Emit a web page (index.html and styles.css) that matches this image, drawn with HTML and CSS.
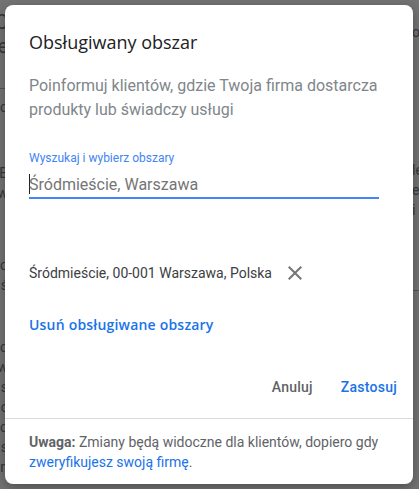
FILE: index.html
```html
<!DOCTYPE html>
<html lang="pl">
<head>
<meta charset="utf-8">
<title>Obsługiwany obszar</title>
<link rel="stylesheet" href="styles.css">
</head>
<body>
<div class="page" aria-hidden="true">
  <div class="col left">
    <div class="ln big">C</div>
    <div class="ln big">e</div>
    <div class="rule"></div>
    <div class="ln">o</div>
    <div class="ln gap1">B</div>
    <div class="ln">w</div>
    <div class="ln gap2">o</div>
    <div class="ln">ś</div>
    <div class="ln gap3">o</div>
    <div class="ln">w</div>
    <div class="ln">s</div>
    <div class="ln">c</div>
    <div class="ln">o</div>
    <div class="ln">s</div>
    <div class="ln">n</div>
  </div>
  <div class="mid"></div>
  <div class="col right">
    <div class="ln">ou</div>
    <div class="ln gapr">le</div>
    <div class="ln">er</div>
    <div class="ln">i</div>
    <div class="rule rr"></div>
  </div>
</div>
<div class="scrim"></div>

<div class="dialog" role="dialog" aria-labelledby="dlg-title">
  <div class="body">
    <h1 class="title" id="dlg-title">Obsługiwany obszar</h1>
    <p class="desc">Poinformuj klientów, gdzie Twoja firma dostarcza produkty lub świadczy usługi</p>

    <div class="field">
      <label class="field-label" for="area">Wyszukaj i wybierz obszary</label>
      <div class="field-input">
        <span class="caret"></span><span class="field-value" id="area">Śródmieście, Warszawa</span>
      </div>
    </div>

    <div class="area-item">
      <span class="area-name">Śródmieście, 00-001 Warszawa, Polska</span>
      <svg class="x-icon" width="24" height="24" viewBox="0 0 24 24" aria-hidden="true">
        <path d="M19 6.41 17.59 5 12 10.59 6.41 5 5 6.41 10.59 12 5 17.59 6.41 19 12 13.41 17.59 19 19 17.59 13.41 12z" fill="#757575"/>
      </svg>
    </div>

    <a class="remove-link" href="#">Usuń obsługiwane obszary</a>
  </div>

  <div class="actions">
    <button class="btn btn-cancel" type="button">Anuluj</button>
    <button class="btn btn-apply" type="button">Zastosuj</button>
  </div>

  <div class="note">
    <b>Uwaga:</b> Zmiany będą widoczne dla klientów, dopiero gdy <a href="#">zweryfikujesz swoją firmę</a>.
  </div>
</div>
</body>
</html>
```

FILE: styles.css
```css
* { box-sizing: border-box; }
html, body { margin: 0; height: 100%; }
body {
  font-family: Roboto, "Liberation Sans", Arial, sans-serif;
  background: #fff;
  overflow: hidden;
  position: relative;
  width: 419px;
  height: 489px;
}

/* background page */
.page {
  display: grid;
  grid-template-columns: 8px 1fr 7px;
  height: 489px;
  color: #7a7a7a;
  font-size: 14px;
}
.col { display: flex; flex-direction: column; overflow: hidden; }
.left { padding-top: 10px; }
.right { padding-top: 22px; }
.ln {
  display: flex;
  white-space: nowrap;
  line-height: 20px;
  height: 20px;
}
.left .ln { justify-content: flex-end; }
.ln.big { font-size: 20px; line-height: 24px; height: 24px; }
.rule { height: 1px; background: #bbb; margin: 30px 0 8px; }
.gap1 { margin-top: 46px; }
.gap2 { margin-top: 52px; }
.gap3 { margin-top: 42px; }
.gapr { margin-top: 118px; }
.rr { margin: 70px 0 0; }

.scrim {
  position: absolute;
  inset: 0;
  background: rgba(0, 0, 0, 0.55);
}

/* dialog */
.dialog {
  position: absolute;
  left: 5px;
  top: 5px;
  width: 408px;
  height: 479px;
  background: #fff;
  border-radius: 8px;
  box-shadow: 0 4px 12px rgba(0,0,0,0.3);
  display: flex;
  flex-direction: column;
}
.body { padding: 25px 24px 0; display: flex; flex-direction: column; align-items: flex-start; }
.title {
  margin: 0;
  font-family: "Open Sans", Roboto, sans-serif;
  font-weight: 400;
  font-size: 18px;
  line-height: 24px;
  color: #202124;
}
.desc {
  margin: 20px 0 0;
  font-size: 16px;
  line-height: 24px;
  color: #80868b;
  width: 360px;
}
.field { margin-top: 28px; width: 350px; }
.field-label {
  display: block;
  font-size: 12px;
  line-height: 16px;
  color: #4285f4;
}
.field-input {
  display: flex;
  align-items: center;
  height: 33px;
  padding-top: 5px;
  border-bottom: 2px solid #4285f4;
  font-size: 16px;
  color: #757575;
}
.caret {
  width: 1px;
  height: 20px;
  background: #202124;
  margin-right: -1px;
}
.area-item {
  margin-top: 62px;
  display: flex;
  align-items: center;
  gap: 11px;
  font-size: 14px;
  color: #3c4043;
  height: 24px;
}
.x-icon { display: block; }
.remove-link {
  margin-top: 30px;
  font-family: "Open Sans", Roboto, sans-serif;
  font-weight: 600;
  font-size: 14px;
  line-height: 20px;
  color: #1a73e8;
  text-decoration: none;
  letter-spacing: 0.2px;
}
.actions {
  margin-top: 34px;
  display: flex;
  justify-content: flex-end;
  gap: 12px;
  padding: 0 8px;
}
.btn {
  border: 0;
  background: none;
  font-family: Roboto, sans-serif;
  font-weight: 500;
  font-size: 14px;
  letter-spacing: 0.25px;
  padding: 8px;
  line-height: 20px;
  cursor: pointer;
}
.btn-cancel { color: #5f6368; }
.btn-apply { color: #1a73e8; }
.note {
  margin-top: auto;
  border-top: 1px solid #dadce0;
  padding: 13px 24px 12px;
  font-size: 14px;
  line-height: 20px;
  color: #5f6368;
}
.note b { font-weight: 700; }
.note a { color: #1a73e8; text-decoration: none; }
```
